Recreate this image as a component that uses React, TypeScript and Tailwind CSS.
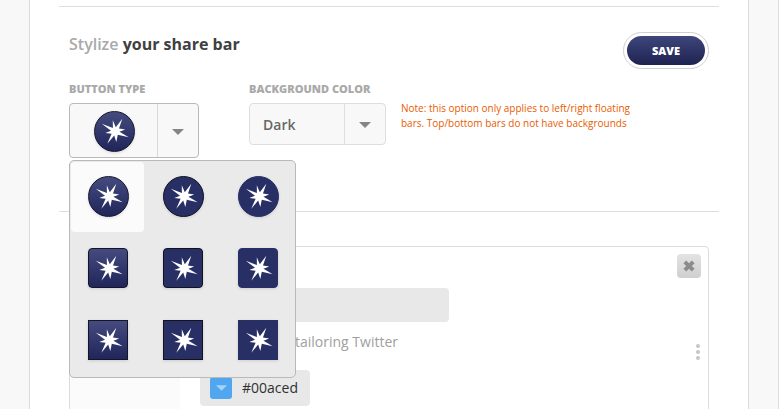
import React from "react";

type Shape = "circle" | "rounded" | "square";
type Finish = "gradient" | "outlined" | "flat";

const shapes: Record<Shape, string> = {
  circle: "size-[41px] rounded-full",
  rounded: "size-[40px] rounded-[4px]",
  square: "size-[40px]",
};

const finishes: Record<Finish, string> = {
  gradient: "border border-[#14152b] bg-linear-to-b from-[#454b7f] to-[#20265a]",
  outlined: "border border-[#12131f] bg-[#282f65]",
  flat: "border border-[#282f65] bg-[#282f65]",
};

function StarButton({ shape, finish }: { shape: Shape; finish: Finish }) {
  return (
    <span className={`block shrink-0 shadow-[0_1px_3px_rgba(0,0,0,0.12)] ${shapes[shape]} ${finishes[finish]}`}>
      <svg viewBox="1 1 38 38" className="block size-[38px]" fill="#fff">
        <path d="M28.3 7.8L25 17.4L31.2 18.5L25.5 20.8L34.7 26.2L23.8 23.8L22.3 30.9L20.2 24.4L13.3 32.8L17.6 22.7L11.3 21.9L17 19.7L7.8 12.8L18.9 17L18.8 9.2L21.8 16.2Z" />
      </svg>
    </span>
  );
}

function Caret({ className }: { className: string }) {
  return (
    <svg viewBox="0 0 12 6" className={className} fill="currentColor">
      <path d="M0 0H12L6 6Z" />
    </svg>
  );
}

function Label({ children }: { children: React.ReactNode }) {
  return (
    <div className="h-[22px] text-[11px] leading-[15px] font-extrabold whitespace-nowrap text-[#a9a9a9]">
      {children}
    </div>
  );
}

const rows: Shape[] = ["circle", "rounded", "square"];
const columns: Finish[] = ["gradient", "outlined", "flat"];

function TypeMenu() {
  return (
    <div className="absolute top-[56px] -left-px z-10 grid h-[218px] w-[227px] grid-cols-[73px_73px_73px] grid-rows-[70px_70px_70px] gap-x-[2px] gap-y-[2px] rounded-[5px] border border-[#b9b9b9] bg-[#eaeaea] pt-px pl-px">
      {rows.map((shape) =>
        columns.map((finish) => (
          <div
            key={shape + finish}
            className={`flex items-start rounded-[4px] pt-[14px] pl-[17px] ${
              shape === "circle" && finish === "gradient" ? "bg-[#fbfbfb]" : ""
            }`}
          >
            <StarButton shape={shape} finish={finish} />
          </div>
        ))
      )}
    </div>
  );
}

export default function App() {
  return (
    <div className="flex h-[409px] w-[779px] overflow-hidden border-r border-[#dedede] bg-[#f8f8f8] pl-[29px] font-['Open_Sans',sans-serif]">
      <main className="h-full w-[720px] border-x border-[#dadada] bg-white px-[29px] pt-[6px]">
        <section className="h-[206px] border-y border-[#dedede] px-[10px]">
          <header className="flex h-[74px] items-start justify-between">
            <h1 className="pt-[26px] text-[16px] leading-[22px] font-bold text-[#404040]">
              <span className="font-semibold text-[#a9a9a9]">Stylize</span> your share bar
            </h1>
            <button className="mt-[25px] flex h-[37px] w-[86px] items-center justify-center rounded-full border border-[#cfcfcf] bg-white">
              <span className="flex h-[29px] w-[78px] items-center justify-center rounded-full bg-linear-to-b from-[#3e467b] to-[#1f2350] pt-[2px] text-[11px] font-extrabold text-white">
                SAVE
              </span>
            </button>
          </header>
          <div className="flex items-start">
            <div className="w-[180px]">
              <Label>BUTTON TYPE</Label>
              <div className="relative flex h-[55px] w-[130px] rounded-[4px] border border-[#b9b9b9] bg-[#f8f8f8]">
                <div className="flex w-[88px] items-start border-r border-[#d8d8d8] pt-[7px] pl-[24px]">
                  <StarButton shape="circle" finish="gradient" />
                </div>
                <div className="flex flex-1 items-center justify-center pt-[2px] text-[#858585]">
                  <Caret className="h-[6px] w-[12px]" />
                </div>
                <TypeMenu />
              </div>
            </div>
            <div className="w-[152px]">
              <Label>BACKGROUND COLOR</Label>
              <div className="flex h-[42px] w-[137px] rounded-[4px] border border-[#dedede] bg-[#f8f8f8]">
                <div className="flex w-[95px] items-center border-r border-[#dedede] pl-[13px] text-[14px] font-semibold text-[#666]">
                  Dark
                </div>
                <div className="flex flex-1 items-center justify-center pt-[2px] text-[#858585]">
                  <Caret className="h-[6px] w-[12px]" />
                </div>
              </div>
            </div>
            <p className="pt-[20px] text-[10px] leading-[15px] whitespace-nowrap text-[#e85c00]">
              Note: this option only applies to left/right floating
              <br />
              bars. Top/bottom bars do not have backgrounds
            </p>
          </div>
        </section>
        <section className="mt-[34px] ml-[10px] flex h-[180px] w-[640px] overflow-hidden rounded-[4px] border border-[#dcdcdc]">
          <div className="w-[110px] shrink-0 bg-[#fbfbfb]" />
          <div className="flex flex-1 justify-between">
            <div className="pt-[41px] pl-[20px]">
              <div className="h-[34px] w-[249px] rounded-[4px] bg-[#e8e8e8]" />
              <p className="w-[198px] pt-[10px] text-right text-[14px] leading-[20px] whitespace-nowrap text-[#a0a0a0]">
                tailoring Twitter
              </p>
              <div className="mt-[18px] flex h-[36px] w-[110px] items-center rounded-[4px] bg-[#e8e8e8] pl-[10px]">
                <span className="flex size-[22px] items-center justify-center rounded-[3px] bg-[#51a7ef] text-[#a3d3f8]">
                  <Caret className="h-[6px] w-[11px]" />
                </span>
                <span className="pb-[2px] pl-[10px] text-[14px] text-[#303030]">#00aced</span>
              </div>
            </div>
            <div className="flex flex-col items-end pt-[7px] pr-[7px]">
              <button className="flex size-[24px] items-center justify-center rounded-[4px] bg-linear-to-b from-[#e3e3e3] to-[#cfcfcf]">
                <svg viewBox="0 0 12 12" className="size-[12px]" stroke="#8c8c8c" strokeWidth="4">
                  <path d="M1.8 1.8L10.2 10.2M10.2 1.8L1.8 10.2" />
                </svg>
              </button>
              <div className="mt-[66px] mr-px flex flex-col gap-[2px]">
                <span className="size-[4px] rounded-full bg-[#c6c6c6]" />
                <span className="size-[4px] rounded-full bg-[#c6c6c6]" />
                <span className="size-[4px] rounded-full bg-[#c6c6c6]" />
              </div>
            </div>
          </div>
        </section>
      </main>
    </div>
  );
}
